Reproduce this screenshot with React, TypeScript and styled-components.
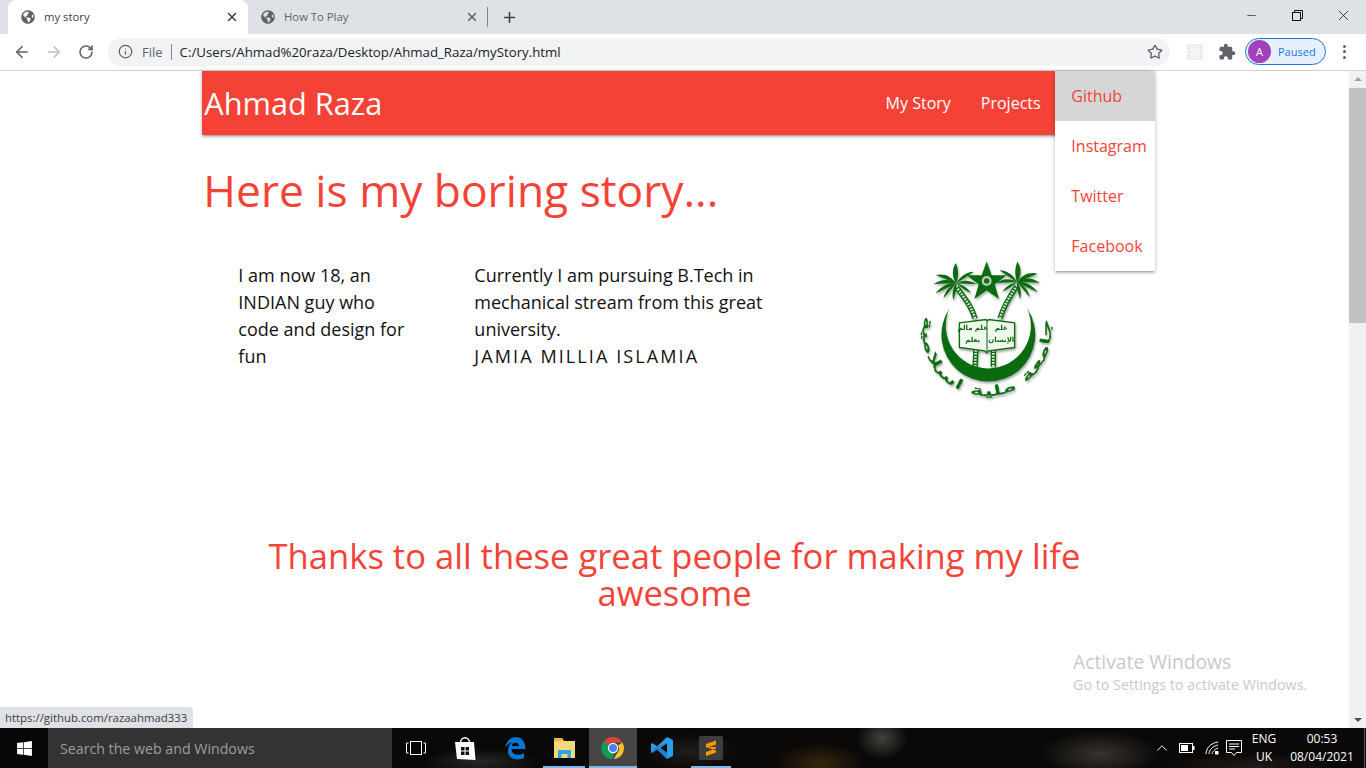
import React from "react";
import styled, { createGlobalStyle } from "styled-components";
import { ArrowLeft, ArrowRight, RotateCw, Info, Star, X, Plus, Minus, ChevronUp } from "lucide-react";
import { FaGlobeAmericas, FaWindows } from "react-icons/fa";
import { MdExtension } from "react-icons/md";

const GlobalStyle = createGlobalStyle`
  html, body {
    margin: 0;
    padding: 0;
    height: 100%;
    overflow: hidden;
    background: #fff;
  }
  * {
    box-sizing: border-box;
  }
`;

const comic = `"Comic Sans MS", "Open Sans", sans-serif`;
const ui = `"Open Sans", "Liberation Sans", sans-serif`;

const Screen = styled.div`
  display: flex;
  flex-direction: column;
  width: 1366px;
  height: 768px;
  overflow: hidden;
  font-family: ${ui};
`;

const TabStrip = styled.div`
  display: flex;
  align-items: flex-end;
  height: 34px;
  padding-left: 8px;
  background: #dee1e6;
`;

const Tab = styled.div<{ $active?: boolean }>`
  display: flex;
  align-items: center;
  width: 240px;
  height: 34px;
  padding: 0 9px 0 13px;
  gap: 9px;
  border-radius: 8px 8px 0 0;
  background: ${(p) => (p.$active ? "#fff" : "transparent")};
  color: ${(p) => (p.$active ? "#3c4043" : "#5f6368")};
  font-size: 11.3px;
  svg {
    flex: none;
  }
`;

const TabTitle = styled.span`
  flex: 1;
  padding-bottom: 1px;
`;

const TabDivider = styled.div`
  width: 1px;
  height: 20px;
  margin: 0 0 7px -1px;
  background: #80868b;
`;

const NewTab = styled.div`
  display: flex;
  width: 43px;
  height: 34px;
  align-items: center;
  justify-content: center;
`;

const WindowButtons = styled.div`
  display: flex;
  margin-left: auto;
  height: 34px;
`;

const WindowButton = styled.div`
  display: flex;
  width: 46px;
  height: 30px;
  align-items: center;
  justify-content: center;
`;

const Toolbar = styled.div`
  display: flex;
  align-items: center;
  height: 37px;
  padding: 0 0 1px 6px;
  border-bottom: 1px solid #d0d2d5;
  background: #fff;
`;

const NavIcon = styled.div`
  display: flex;
  width: 32px;
  height: 32px;
  align-items: center;
  justify-content: center;
`;

const Omnibox = styled.div`
  display: flex;
  align-items: center;
  width: 1062px;
  height: 28px;
  margin-left: 6px;
  padding: 0 7px 0 10px;
  border-radius: 14px;
  background: #f1f3f4;
  font-size: 13.25px;
  color: #202124;
`;

const SiteInfo = styled.span`
  margin-left: 9px;
  font-size: 13px;
  color: #5f6368;
`;

const OmniDivider = styled.span`
  width: 1px;
  height: 16px;
  margin: 0 8px;
  background: #80868b;
`;

const Url = styled.span`
  flex: 1;
  white-space: nowrap;
`;

const ToolIcons = styled.div`
  display: flex;
  align-items: center;
  flex: 1;
`;

const ExtSlot = styled.div<{ $first?: boolean }>`
  display: flex;
  width: 32px;
  height: 32px;
  margin-left: ${(p) => (p.$first ? "9px" : "0")};
  align-items: center;
  justify-content: center;
`;

const ProfilePill = styled.div`
  display: flex;
  align-items: center;
  width: 81px;
  height: 27px;
  margin-left: 2px;
  padding-left: 2px;
  border: 1px solid #1a73e8;
  border-radius: 14px;
  background: #e8f0fe;
  color: #1a73e8;
  font-size: 11px;
`;

const Avatar = styled.div`
  display: flex;
  width: 23px;
  height: 23px;
  margin-right: 7px;
  align-items: center;
  justify-content: center;
  border-radius: 50%;
  background: #a142bd;
  color: #fff;
  font-size: 11px;
`;

const Kebab = styled.div`
  display: flex;
  flex-direction: column;
  gap: 2.5px;
  margin-left: 17px;
  span {
    width: 3px;
    height: 3px;
    border-radius: 50%;
    background: #5f6368;
  }
`;

const PageArea = styled.div`
  position: relative;
  display: flex;
  flex: 1;
  min-height: 0;
`;

const Page = styled.main`
  flex: 1;
  background: #fff;
`;

const Container = styled.div`
  position: relative;
  width: 70%;
  margin: 0 auto;
  font-family: ${comic};
`;

const Navbar = styled.nav`
  display: flex;
  align-items: center;
  justify-content: space-between;
  height: 64px;
  padding: 0 91px 0 2px;
  background: #f44336;
  box-shadow: 0 2px 2px 0 rgba(0, 0, 0, 0.14), 0 3px 1px -2px rgba(0, 0, 0, 0.12), 0 1px 5px 0 rgba(0, 0, 0, 0.2);
  color: #fff;
`;

const Brand = styled.a`
  font-size: 30.7px;
`;

const NavLinks = styled.div`
  display: flex;
  font-size: 16px;
`;

const NavLink = styled.a`
  padding: 0 15px;
`;

const Dropdown = styled.ul`
  position: absolute;
  top: 0;
  left: 853px;
  width: 100px;
  margin: 0;
  padding: 0;
  list-style: none;
  background: #fff;
  box-shadow: 0 2px 2px 0 rgba(0, 0, 0, 0.14), 0 3px 1px -2px rgba(0, 0, 0, 0.12), 0 1px 5px 0 rgba(0, 0, 0, 0.2);
`;

const DropdownItem = styled.li<{ $hover?: boolean }>`
  display: flex;
  align-items: center;
  height: 50px;
  padding-left: 16px;
  background: ${(p) => (p.$hover ? "#d6d6d6" : "#fff")};
  color: #f44336;
  font-size: 16px;
  white-space: nowrap;
`;

const Heading = styled.h1`
  margin: 27px 0 39px 1px;
  color: #f44336;
  font-size: 44.3px;
  font-weight: 400;
  line-height: 56px;
`;

const StoryRow = styled.section`
  display: grid;
  grid-template-columns: 236px 236px 1fr;
  height: 280px;
`;

const StoryText = styled.p`
  margin: 0;
  padding: 5px 0 0 36px;
  color: #111;
  font-size: 18px;
  line-height: 27px;
  white-space: nowrap;
`;

const CapsLine = styled.span`
  letter-spacing: 2.1px;
`;

const LogoCell = styled.div`
  padding-left: 246px;
`;

const Thanks = styled.h2`
  margin: 0;
  color: #f44336;
  font-size: 34.6px;
  font-weight: 400;
  line-height: 37px;
  text-align: center;
`;

const Scrollbar = styled.div`
  display: flex;
  flex-direction: column;
  align-items: center;
  width: 17px;
  background: #f1f1f1;
`;

const ScrollArrow = styled.div<{ $down?: boolean }>`
  width: 0;
  height: 0;
  margin: 6px 0;
  border-left: 4px solid transparent;
  border-right: 4px solid transparent;
  border-${(p) => (p.$down ? "top" : "bottom")}: 4px solid ${(p) => (p.$down ? "#505050" : "#a3a3a3")};
`;

const ScrollThumb = styled.div`
  width: 100%;
  height: 235px;
  margin-top: 1px;
  background: #c1c1c1;
`;

const ScrollTrack = styled.div`
  flex: 1;
`;

const StatusBubble = styled.div`
  position: absolute;
  left: 0;
  bottom: 0;
  display: flex;
  align-items: center;
  width: 193px;
  height: 21px;
  padding-left: 5px;
  border-top-right-radius: 4px;
  background: #dee1e6;
  color: #3c4043;
  font-size: 11.4px;
  white-space: nowrap;
`;

const Watermark = styled.div`
  position: absolute;
  left: 1073px;
  top: 578px;
  color: #c8c8c8;
  font-size: 14.3px;
  line-height: 20px;
`;

const WatermarkTitle = styled.div`
  font-size: 19.3px;
  line-height: 26px;
`;

const Taskbar = styled.footer`
  display: flex;
  align-items: center;
  height: 40px;
  background:
    radial-gradient(ellipse 46px 22px at 820px 36px, rgba(120, 80, 20, 0.4), transparent),
    radial-gradient(ellipse 26px 22px at 882px 10px, rgba(150, 150, 140, 0.4), transparent),
    radial-gradient(ellipse 60px 14px at 480px 34px, rgba(110, 110, 110, 0.3), transparent),
    radial-gradient(ellipse 50px 20px at 690px 24px, rgba(90, 90, 90, 0.25), transparent),
    radial-gradient(ellipse 60px 24px at 1100px 26px, rgba(140, 130, 120, 0.35), transparent),
    radial-gradient(ellipse 90px 14px at 1250px 38px, rgba(100, 80, 70, 0.25), transparent),
    #090807;
  color: #fff;
`;

const StartButton = styled.div`
  display: flex;
  width: 48px;
  height: 40px;
  align-items: center;
  justify-content: center;
  background: #060606;
`;

const SearchBox = styled.div`
  display: flex;
  align-items: center;
  width: 344px;
  height: 40px;
  padding-left: 12px;
  background: #333;
  color: #9d9d9d;
  font-size: 14.2px;
`;

const TaskSlot = styled.div<{ $w: number; $active?: boolean; $running?: boolean; $inset?: number }>`
  position: relative;
  display: flex;
  flex: none;
  width: ${(p) => p.$w}px;
  height: 40px;
  align-items: center;
  justify-content: center;
  background: ${(p) => (p.$active ? "#474645" : "transparent")};
  &::after {
    content: "";
    display: ${(p) => (p.$running ? "block" : "none")};
    position: absolute;
    left: ${(p) => p.$inset ?? 0}px;
    right: ${(p) => p.$inset ?? 0}px;
    bottom: 0;
    height: 2px;
    background: #76b9ed;
  }
`;

const Tray = styled.div`
  display: flex;
  align-items: center;
  height: 40px;
  margin-left: auto;
`;

const TrayIcon = styled.div<{ $w: number }>`
  display: flex;
  width: ${(p) => p.$w}px;
  justify-content: center;
`;

const TrayText = styled.div`
  width: 32px;
  margin-left: 4px;
  font-size: 12px;
  line-height: 18px;
  text-align: center;
`;

const Clock = styled.div`
  width: 76px;
  margin-left: 4px;
  font-size: 12px;
  line-height: 18px;
  text-align: center;
`;

const DesktopEdge = styled.div`
  width: 1px;
  height: 40px;
  margin: 0 1px 0 4px;
  background: #555;
`;

const LogoSvg = styled.svg`
  display: block;
  overflow: visible;
  filter: drop-shadow(1px 2px 1px rgba(60, 70, 60, 0.45)) blur(0.3px);
`;

const green = "#0b6b0f";

// one palm crown, drawn around 0,0
const fronds = [
  "M0 0C-14 -22 -34 -32 -62 -26C-42 -18 -22 -10 0 0Z",
  "M0 0C-20 -16 -46 -14 -68 2C-44 0 -22 0 0 0Z",
  "M0 0C-20 -4 -46 8 -62 30C-40 20 -20 10 0 0Z",
  "M0 0C-14 4 -32 20 -38 44C-24 30 -12 14 0 0Z",
  "M0 0C-12 -20 -14 -44 0 -62C8 -40 8 -20 0 0Z",
  "M0 0C10 -18 28 -36 54 -36C36 -24 18 -12 0 0Z",
  "M0 0C18 -12 42 -12 62 2C40 2 20 0 0 0Z",
  "M0 0C14 2 34 10 44 28C28 22 14 10 0 0Z",
  "M0 0C4 8 -2 30 -8 50C-14 30 -8 10 0 0Z",
];

const Palm = ({ x, y, flip }: { x: number; y: number; flip?: boolean }) => (
  <g transform={`translate(${x} ${y}) scale(${flip ? -1 : 1} 1)`} fill={green}>
    {fronds.map((d) => (
      <path key={d} d={d} />
    ))}
  </g>
);

function BookLines() {
  const lines = [
    { x: 218, y: 241, t: "علم مالم" },
    { x: 218, y: 276, t: "يعلم" },
    { x: 304, y: 241, t: "علم" },
    { x: 304, y: 276, t: "الإنسان" },
  ];
  return (
    <g fontFamily="DejaVu Sans" fontSize="21" fontWeight="700" fill={green} textAnchor="middle">
      {lines.map((l) => (
        <text key={l.t + l.x} x={l.x} y={l.y}>
          {l.t}
        </text>
      ))}
    </g>
  );
}

const UniversityLogo = () => (
  <LogoSvg width="130" height="143" viewBox="60 20 390 430">
    <defs>
      <path id="ring" d="M76 190A192 192 0 1 0 444 190" />
    </defs>
    {/* trunks */}
    <g fill="none" strokeWidth="16">
      <path d="M225 350L228 290M225 205C215 170 195 145 170 112" stroke={green} />
      <path d="M280 350L280 290M300 205C310 170 325 145 350 108" stroke={green} />
    </g>
    <g fill="none" strokeWidth="8" strokeDasharray="5 4">
      <path d="M225 350L228 290M225 205C215 170 195 145 170 112" stroke="#dfe9d6" />
      <path d="M280 350L280 290M300 205C310 170 325 145 350 108" stroke="#dfe9d6" />
    </g>
    <Palm x={168} y={100} />
    <Palm x={352} y={96} flip />
    <polygon
      points="260,33 275,75 320,75 284,102 297,146 260,120 223,146 236,102 200,75 245,75"
      fill={green}
    />
    <circle cx="260" cy="92" r="15" fill="#b9cdb3" />
    <circle cx="260" cy="92" r="8" fill={green} />
    <path d="M148 175A141 141 0 1 0 382 175A128 128 0 1 1 148 175Z" fill={green} />
    {/* open book */}
    <path d="M178 218L258 208L262 212L266 208L344 218L344 292L266 302L260 308L254 302L178 292Z" fill="#f2f7ee" stroke={green} strokeWidth="4" />
    <path d="M261 212V306" stroke={green} strokeWidth="3" />
    <BookLines />
    <text fontFamily="DejaVu Sans" fontSize="40" fill={green} stroke={green} strokeWidth="1" textLength="690" lengthAdjust="spacingAndGlyphs">
      <textPath href="#ring" startOffset="1%">
        جامعة ملية اسلامية
      </textPath>
    </text>
  </LogoSvg>
);

const ReactBadge = () => (
  <svg width="16" height="16" viewBox="0 0 16 16">
    <rect width="16" height="16" fill="#ececec" />
    <g fill="none" stroke="#fafafa" strokeWidth="0.9">
      <ellipse cx="8" cy="8" rx="7" ry="2.800" />
      <ellipse cx="8" cy="8" rx="7" ry="2.800" transform="rotate(60 8 8)" />
      <ellipse cx="8" cy="8" rx="7" ry="2.800" transform="rotate(120 8 8)" />
    </g>
    <circle cx="8" cy="8" r="1.400" fill="#fafafa" />
  </svg>
);

const ChromeIcon = () => (
  <svg width="24" height="24" viewBox="0 0 24 24">
    <path d="M12 1a11 11 0 0 1 9.5 5.5H12a5.5 5.5 0 0 0-5.2 3.6L3.3 4.6A11 11 0 0 1 12 1Z" fill="#db4437" />
    <path d="M21.5 6.5A11 11 0 0 1 12.8 23l4-7a5.5 5.5 0 0 0 .1-6.5Z" fill="#fbc02d" />
    <path d="M3.3 4.6l4.7 8.3a5.5 5.5 0 0 0 6.2 2.7L10.7 23A11 11 0 0 1 3.3 4.6Z" fill="#0f9d58" />
    <circle cx="12" cy="12" r="5.2" fill="#fff" />
    <circle cx="12" cy="12" r="4" fill="#4285f4" />
  </svg>
);

const StoreIcon = () => (
  <svg width="22" height="26" viewBox="0 0 22 26">
    <path d="M6.5 8C6.5 1 15.500 1 15.500 8" fill="none" stroke="#fff" strokeWidth="1.4" />
    <path d="M1 7H20L21.500 25L3 24Z" fill="#fff" />
    <path d="M7 12H10.500V15.500H7ZM11.500 12H15V15.500H11.500ZM7 16.500H10.500V20H7ZM11.500 16.500H15V20H11.500Z" fill="#111" />
  </svg>
);

const EdgeIcon = () => (
  <svg width="22" height="24" viewBox="0 0 22 24">
    <path
      d="M1 12C2 5 7 1 12 1c6 0 9.500 5 9.500 12H7.500c0 6 8 7.500 12.500 4v5c-6 3-17 1.500-16-8C4.500 9 7 7 8 6 5 7 2.500 9 1 12ZM7.800 10H15c0-4-6.500-4.500-7.200 0Z"
      fill="#0078d7"
    />
  </svg>
);

const FolderIcon = () => (
  <svg width="21" height="20" viewBox="0 0 21 20">
    <path d="M0 0H8L10 3H21V20H0Z" fill="#f6d87a" />
    <path d="M0 0H8L10 3H0Z" fill="#e5b94c" />
    <path d="M4 20V12H17V20H13.500V16H7.500V20Z" fill="#29a8e0" />
  </svg>
);

const VSCodeIcon = () => (
  <svg width="24" height="24" viewBox="0 0 24 24">
    <path d="M17 1L23 4V20L17 23L7 13.500L2.500 17L1 16V8L2.500 7L7 10.500Z" fill="#2b9fe6" />
    <path d="M17 1V23L7 13.500L2.500 17L1 16L5 12L17 6.500Z" fill="#0f6fb8" opacity="0.55" />
    <path d="M17 7.500L10.500 12L17 16.500Z" fill="#0b0b0b" />
  </svg>
);

const SublimeIcon = () => (
  <svg width="24" height="24" viewBox="0 0 24 24">
    <rect width="24" height="24" rx="2" fill="#3d3d3d" />
    <path d="M17 4.500V8.500L7 12V8Z M7 11L17 14.500V11ZM17 12.500V16.500L7 20V16Z" fill="#ff9800" />
  </svg>
);

const BatteryIcon = () => (
  <svg width="16" height="10" viewBox="0 0 16 10">
    <rect x="0.5" y="0.5" width="13" height="9" fill="none" stroke="#fff" />
    <rect x="2" y="2" width="7" height="6" fill="#fff" />
    <rect x="14" y="3" width="1.500" height="4" fill="#fff" />
  </svg>
);

const WifiIcon = () => (
  <svg width="14" height="14" viewBox="0 0 14 14" fill="none" stroke="#fff" strokeWidth="1">
    <path d="M1 13C1 7 6 2 13 1" />
    <path d="M4 13C4 9 8 5 13 4" />
    <path d="M7 13C7 11 10 8 13 7" />
    <rect x="10" y="10" width="3.500" height="3.500" fill="#fff" stroke="none" />
  </svg>
);

const NotesIcon = () => (
  <svg width="16" height="17" viewBox="0 0 16 17" fill="none" stroke="#fff" strokeWidth="1">
    <path d="M0.500 0.500H15.500V12.500H10.500L8 15.500L5.500 12.500H0.500Z" />
    <path d="M3 4H13M3 6.500H13M3 9H9" />
  </svg>
);

const TaskViewIcon = () => (
  <svg width="20" height="14" viewBox="0 0 20 14" fill="none" stroke="#fff" strokeWidth="1">
    <rect x="4.500" y="0.500" width="11" height="13" />
    <path d="M2.500 2H0.500V12H2.500M17.500 2H19.500V12H17.500" />
  </svg>
);

const App = () => {
  return (
    <Screen>
      <GlobalStyle />
      <TabStrip>
        <Tab $active>
          <FaGlobeAmericas size={14} color="#5f6368" />
          <TabTitle>my story</TabTitle>
          <X size={14} color="#3c4043" strokeWidth={2.5} />
        </Tab>
        <Tab>
          <FaGlobeAmericas size={14} color="#5f6368" />
          <TabTitle>How To Play</TabTitle>
          <X size={14} color="#5f6368" strokeWidth={2.5} />
        </Tab>
        <TabDivider />
        <NewTab>
          <Plus size={17} color="#3c4043" strokeWidth={2.2} />
        </NewTab>
        <WindowButtons>
          <WindowButton>
            <Minus size={13} color="#111" strokeWidth={1.2} />
          </WindowButton>
          <WindowButton>
            <svg width="11" height="11" viewBox="0 0 11 11" fill="none" stroke="#111">
              <rect x="0.500" y="2.500" width="8" height="8" />
              <path d="M2.500 2.500V0.500H10.500V8.500H8.500" />
            </svg>
          </WindowButton>
          <WindowButton>
            <X size={17} color="#111" strokeWidth={1.1} />
          </WindowButton>
        </WindowButtons>
      </TabStrip>
      <Toolbar>
        <NavIcon>
          <ArrowLeft size={18} color="#5f6368" strokeWidth={2.2} />
        </NavIcon>
        <NavIcon>
          <ArrowRight size={18} color="#bdc1c6" strokeWidth={2.2} />
        </NavIcon>
        <NavIcon>
          <RotateCw size={16} color="#5f6368" strokeWidth={2.4} />
        </NavIcon>
        <Omnibox>
          <Info size={15} color="#5f6368" strokeWidth={2} />
          <SiteInfo>File</SiteInfo>
          <OmniDivider />
          <Url>C:/Users/Ahmad%20raza/Desktop/Ahmad_Raza/myStory.html</Url>
          <Star size={16} color="#5f6368" strokeWidth={2} />
        </Omnibox>
        <ToolIcons>
          <ExtSlot $first>
            <ReactBadge />
          </ExtSlot>
          <ExtSlot>
            <MdExtension size={18} color="#5f6368" />
          </ExtSlot>
          <ProfilePill>
            <Avatar>A</Avatar>
            Paused
          </ProfilePill>
          <Kebab>
            <span />
            <span />
            <span />
          </Kebab>
        </ToolIcons>
      </Toolbar>
      <PageArea>
        <Page>
          <Container>
            <Navbar>
              <Brand>Ahmad Raza</Brand>
              <NavLinks>
                <NavLink>My Story</NavLink>
                <NavLink>Projects</NavLink>
              </NavLinks>
            </Navbar>
            <Dropdown>
              <DropdownItem $hover>Github</DropdownItem>
              <DropdownItem>Instagram</DropdownItem>
              <DropdownItem>Twitter</DropdownItem>
              <DropdownItem>Facebook</DropdownItem>
            </Dropdown>
            <Heading>Here is my boring story...</Heading>
            <StoryRow>
              <StoryText>
                I am now 18, an
                <br />
                INDIAN guy who
                <br />
                code and design for
                <br />
                fun
              </StoryText>
              <StoryText>
                Currently I am pursuing B.Tech in
                <br />
                mechanical stream from this great
                <br />
                university.
                <br />
                <CapsLine>JAMIA MILLIA ISLAMIA</CapsLine>
              </StoryText>
              <LogoCell>
                <UniversityLogo />
              </LogoCell>
            </StoryRow>
            <Thanks>
              Thanks to all these great people for making my life
              <br />
              awesome
            </Thanks>
          </Container>
        </Page>
        <Scrollbar>
          <ScrollArrow />
          <ScrollThumb />
          <ScrollTrack />
          <ScrollArrow $down />
        </Scrollbar>
        <StatusBubble>https://github.com/razaahmad333</StatusBubble>
        <Watermark>
          <WatermarkTitle>Activate Windows</WatermarkTitle>
          Go to Settings to activate Windows.
        </Watermark>
      </PageArea>
      <Taskbar>
        <StartButton>
          <FaWindows size={17} color="#fff" />
        </StartButton>
        <SearchBox>Search the web and Windows</SearchBox>
        <TaskSlot $w={48}>
          <TaskViewIcon />
        </TaskSlot>
        <TaskSlot $w={50}>
          <StoreIcon />
        </TaskSlot>
        <TaskSlot $w={49}>
          <EdgeIcon />
        </TaskSlot>
        <TaskSlot $w={50} $running $inset={4}>
          <FolderIcon />
        </TaskSlot>
        <TaskSlot $w={48} $active $running>
          <ChromeIcon />
        </TaskSlot>
        <TaskSlot $w={49}>
          <VSCodeIcon />
        </TaskSlot>
        <TaskSlot $w={50} $running $inset={5}>
          <SublimeIcon />
        </TaskSlot>
        <Tray>
          <TrayIcon $w={24}>
            <ChevronUp size={18} color="#fff" strokeWidth={1.3} />
          </TrayIcon>
          <TrayIcon $w={26}>
            <BatteryIcon />
          </TrayIcon>
          <TrayIcon $w={24}>
            <WifiIcon />
          </TrayIcon>
          <TrayIcon $w={20}>
            <NotesIcon />
          </TrayIcon>
          <TrayText>
            ENG
            <br />
            UK
          </TrayText>
          <Clock>
            00:53
            <br />
            08/04/2021
          </Clock>
          <DesktopEdge />
        </Tray>
      </Taskbar>
    </Screen>
  );
};

export default App;
